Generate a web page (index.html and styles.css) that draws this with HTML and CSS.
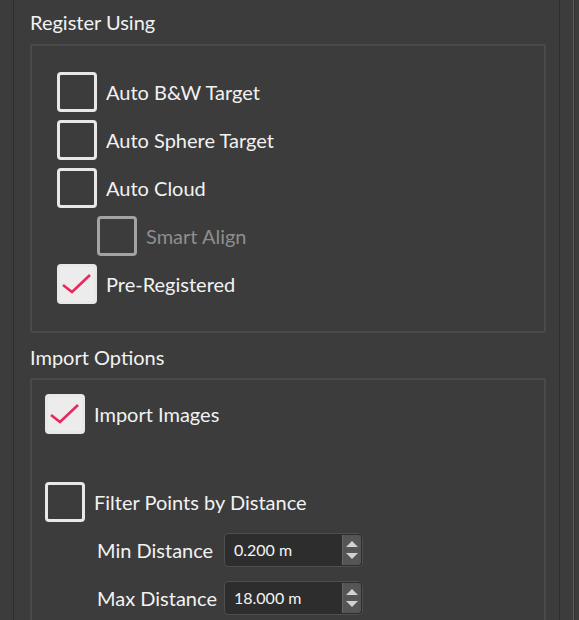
FILE: index.html
```html
<!DOCTYPE html>
<html lang="en">
<head>
<meta charset="utf-8">
<title>Register Options</title>
<link rel="stylesheet" href="styles.css">
</head>
<body>
<div class="window">
  <div class="panel">
    <div class="section-title">Register Using</div>
    <div class="group group-register">
      <div class="check-row"><span class="box"></span><span class="label">Auto B&amp;W Target</span></div>
      <div class="check-row"><span class="box"></span><span class="label">Auto Sphere Target</span></div>
      <div class="check-row"><span class="box"></span><span class="label">Auto Cloud</span></div>
      <div class="check-row sub disabled"><span class="box"></span><span class="label">Smart Align</span></div>
      <div class="check-row"><span class="box checked"><svg viewBox="0 0 34 34"><polyline points="3,18 12,25 30,8"/></svg></span><span class="label">Pre-Registered</span></div>
    </div>
    <div class="section-title second">Import Options</div>
    <div class="group group-import">
      <div class="check-row"><span class="box checked"><svg viewBox="0 0 34 34"><polyline points="3,18 12,25 30,8"/></svg></span><span class="label">Import Images</span></div>
      <div class="check-row filter"><span class="box"></span><span class="label">Filter Points by Distance</span></div>
      <div class="dist-grid">
        <span class="dist-label">Min Distance</span>
        <div class="spinbox"><span class="value">0.200 m</span><span class="spin"><svg viewBox="0 0 18 30"><polygon points="3,12 9,6 15,12"/><polygon points="3,18 15,18 9,24"/></svg></span></div>
        <span class="dist-label">Max Distance</span>
        <div class="spinbox"><span class="value">18.000 m</span><span class="spin"><svg viewBox="0 0 18 30"><polygon points="3,12 9,6 15,12"/><polygon points="3,18 15,18 9,24"/></svg></span></div>
      </div>
    </div>
  </div>
  <div class="edge"><div class="edge-line"></div></div>
</div>
</body>
</html>
```

FILE: styles.css
```css
html, body {
  margin: 0;
  padding: 0;
  height: 100%;
  background: #3c3c3c;
  overflow: hidden;
}

body {
  font-family: Lato, "Open Sans", sans-serif;
  color: #f2f2f2;
}

.window {
  display: flex;
  height: 620px;
}

.panel {
  margin-left: 13px;
  width: 516px;
  padding: 10px 13px 0 16px;
  border-left: 1px solid #2e2e2e;
  border-right: 1px solid #2e2e2e;
  display: flex;
  flex-direction: column;
}

.edge {
  width: 19px;
  display: flex;
}

.edge-line {
  margin-left: 13px;
  width: 1px;
  background: #5e5e5e;
  border-right: 1px solid #2f2f2f;
}

.section-title {
  font-size: 20px;
  line-height: 24px;
  height: 24px;
  margin-bottom: 10px;
  white-space: nowrap;
  flex: none;
}

.section-title.second {
  margin-top: 12px;
  margin-bottom: 9px;
}

.group {
  border: 2px solid #4a4a4a;
  border-radius: 2px;
  display: flex;
  flex-direction: column;
  gap: 8px;
}

.group-register {
  padding: 26px 0 27px 25px;
  flex: none;
}

.group-import {
  padding: 14px 0 0 13px;
  border-bottom: none;
  border-radius: 2px 2px 0 0;
  flex: 1;
}

.check-row {
  display: flex;
  align-items: center;
  gap: 9px;
  height: 40px;
  font-size: 20px;
  white-space: nowrap;
  flex: none;
}

.check-row.sub {
  margin-left: 40px;
}

.check-row.filter {
  margin-top: 40px;
}

.box {
  box-sizing: border-box;
  width: 40px;
  height: 40px;
  border: 3px solid #e8e8e8;
  border-radius: 4px;
  flex: none;
  display: block;
}

.box.checked {
  background: #ececec;
}

.box svg {
  display: block;
  width: 34px;
  height: 34px;
}

.box svg polyline {
  fill: none;
  stroke: #e8285e;
  stroke-width: 2.6;
}

.disabled .box {
  border-color: #a3a3a3;
}

.disabled .label {
  color: #8e8e8e;
}

.dist-grid {
  margin-top: 3px;
  padding-left: 52px;
  display: grid;
  grid-template-columns: 127px 139px;
  grid-auto-rows: 34px;
  row-gap: 14px;
  align-items: center;
}

.dist-label {
  font-size: 20px;
  white-space: nowrap;
}

.spinbox {
  box-sizing: border-box;
  height: 34px;
  display: flex;
  align-items: stretch;
  background: #2d2d2d;
  border: 1px solid #4e4e4e;
  border-radius: 4px;
  padding: 1px;
}

.spinbox .value {
  flex: 1;
  padding-left: 8px;
  font-size: 16px;
  line-height: 30px;
  color: #f4f4f4;
}

.spin {
  box-sizing: border-box;
  width: 19px;
  background: #555555;
  border-left: 1px solid #666666;
  border-radius: 0 3px 3px 0;
}

.spin svg {
  display: block;
  width: 18px;
  height: 30px;
}

.spin polygon {
  fill: #d2d2d2;
}
```
